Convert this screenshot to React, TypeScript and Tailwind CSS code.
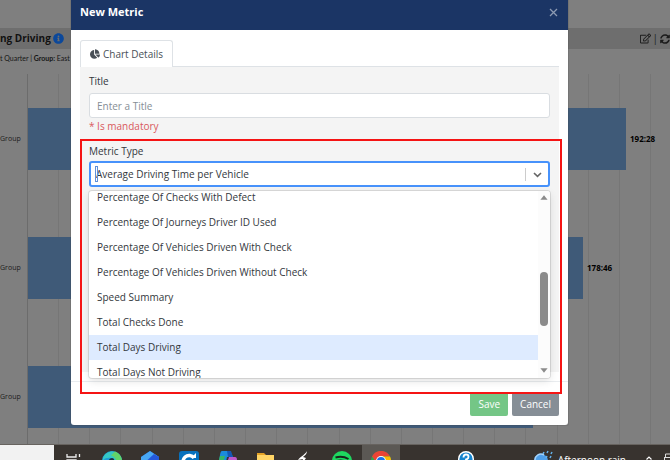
import { FaChartPie, FaInfoCircle, FaRegEdit, FaSyncAlt } from "react-icons/fa";

const bars = [
  { label: "Group", value: "192:28", width: 598 },
  { label: "Group", value: "178:46", width: 555 },
  { label: "Group", value: "", width: 505 },
];

const metricTypes = [
  "Percentage Of Checks With Defect",
  "Percentage Of Journeys Driver ID Used",
  "Percentage Of Vehicles Driven With Check",
  "Percentage Of Vehicles Driven Without Check",
  "Speed Summary",
  "Total Checks Done",
  "Total Days Driving",
  "Total Days Not Driving",
];

const selectedMetric = "Total Days Driving";

function Dashboard() {
  return (
    <main className="flex flex-1 flex-col bg-[#7f7f7f] pt-7 text-black">
      <header className="flex h-[21px] items-center justify-between bg-[#6e6e6e]">
        <h1 className="flex items-center gap-[2px] text-[10px] font-bold text-[#111]">
          ng Driving
          <FaInfoCircle className="size-[11px] text-[#0b489b]" />
        </h1>
        <div className="flex items-center gap-[2px] text-[10px] text-[#1c1c1c]">
          <button type="button" aria-label="Edit">
            <FaRegEdit className="size-[11px]" />
          </button>
          |
          <button type="button" aria-label="Refresh">
            <FaSyncAlt className="size-[10px]" />
          </button>
        </div>
      </header>
      <p className="h-[25px] pt-[2px] font-['Lato','Open_Sans',sans-serif] text-[7px] leading-[14px] whitespace-nowrap text-[#151515]">
        t Quarter | <b>Group:</b> East
      </p>
      <div className="relative flex flex-1 flex-col gap-[67px] pt-[34px]">
        <svg className="absolute inset-0 size-full" aria-hidden="true">
          {Array.from({ length: 21 }, (_, i) => (
            <rect
              key={i}
              x={Math.round(27 + i * 31.15)}
              y="0"
              width="1"
              height="100%"
              fill={i === 0 ? "#6c6c6c" : "#767676"}
            />
          ))}
        </svg>
        {bars.map((bar, i) => (
          <div key={i} className="relative flex h-[62px] items-center">
            <span className="w-7 text-[7px] text-[#1c1c1c]">{bar.label}</span>
            <div className="h-full bg-[#3f5a78]" style={{ width: bar.width }} />
            <span className="pl-1 text-[8px] font-bold">{bar.value}</span>
          </div>
        ))}
      </div>
    </main>
  );
}

function MetricMenu() {
  return (
    <div className="absolute inset-x-0 top-full mt-1 flex h-[187px] overflow-hidden rounded-[3px] bg-white shadow-[0_0_0_1px_rgba(0,0,0,0.1),0_3px_8px_rgba(0,0,0,0.12)]">
      <div className="h-full flex-1 overflow-hidden">
        <ul role="listbox" aria-label="Metric Type options" className="-mt-[6px] grid h-[200px] grid-rows-8">
          {metricTypes.map((type) => (
            <li
              key={type}
              role="option"
              aria-selected={type === selectedMetric}
              className={`flex items-center px-2 text-[10px] ${
                type === selectedMetric ? "bg-[#deebff]" : ""
              }`}
            >
              {type}
            </li>
          ))}
        </ul>
      </div>
      <div className="flex w-3 flex-col items-center bg-[#fcfcfc]">
        <svg viewBox="0 0 8 5" className="mt-1 h-[5px] w-2 fill-[#8b8b8b]">
          <path d="M4 0.3 7.6 4.8H.4z" />
        </svg>
        <div className="mt-[72px] h-[54px] w-2 rounded-full bg-[#8b8b8b]" />
        <svg viewBox="0 0 8 5" className="mt-auto mb-[5px] h-[5px] w-2 fill-[#8b8b8b]">
          <path d="M4 4.7.4.2h7.2z" />
        </svg>
      </div>
    </div>
  );
}

function NewMetricDialog() {
  return (
    <div
      role="dialog"
      aria-labelledby="dialog-title"
      className="flex-1 overflow-hidden rounded-b-[3px] bg-white text-[10px] text-[#33373c]"
    >
      <div className="flex h-[30px] items-start justify-between bg-[#1b3565] pr-[10px] pl-[9px]">
        <h2 id="dialog-title" className="text-[11px] leading-6 font-bold text-white">
          New Metric
        </h2>
        <button type="button" aria-label="Close" className="mt-2 text-[#8d9ab2]">
          <svg viewBox="0 0 9 9" className="size-[9px]" stroke="currentColor" strokeWidth="1.3">
            <path d="M1 1l7 7M8 1L1 8" />
          </svg>
        </button>
      </div>
      <div className="px-[9px] pt-[10px]">
        <div role="tablist" className="flex h-[27px] border-b border-[#dee2e6]">
          <button
            type="button"
            role="tab"
            aria-selected="true"
            className="-mb-px flex items-center gap-[3px] rounded-t-[3px] border border-b-0 border-[#dee2e6] bg-white px-[9px] text-[#495057]"
          >
            <FaChartPie className="size-[10px]" />
            Chart Details
          </button>
        </div>
        <div className="h-[305px] bg-[#f4f4f4] px-[9px] pt-[6px]">
          <label htmlFor="title" className="block leading-4">
            Title
          </label>
          <input
            id="title"
            placeholder="Enter a Title"
            className="mt-1 block h-[25px] w-full rounded-[3px] border border-[#d9dde1] bg-white px-[7px] outline-none placeholder:text-[#868e96]"
          />
          <p className="leading-4 text-[#d9595d]">* Is mandatory</p>
          <label htmlFor="metric-type" className="mt-[9px] block leading-4">
            Metric Type
          </label>
          <div className="relative mt-[2px]">
            <select
              id="metric-type"
              className="block h-[26px] w-full appearance-none rounded-[3px] border-2 border-[#4792fb] bg-white px-[5px] outline-none"
            >
              <option>Average Driving Time per Vehicle</option>
              {metricTypes.map((type) => (
                <option key={type}>{type}</option>
              ))}
            </select>
            <span className="absolute top-[5px] left-[6px] h-4 w-[3px] border border-[#5f8fd8]" />
            <div className="pointer-events-none absolute inset-y-0 right-0 flex items-center gap-[7px] pr-2">
              <span className="h-[13px] w-px bg-[#cccccc]" />
              <svg viewBox="0 0 9 9" className="size-[9px]" fill="none" stroke="#666" strokeWidth="1.6">
                <path d="M1 3l3.5 3.3L8 3" />
              </svg>
            </div>
            <MetricMenu />
          </div>
        </div>
      </div>
      <div className="mt-[9px] flex h-[44px] items-center justify-end gap-1 border-t border-[#e9ecef] px-[9px] pt-px text-white">
        <button type="button" className="h-6 rounded-[2px] bg-[#74c686] px-2">
          Save
        </button>
        <button type="button" className="h-6 rounded-[2px] bg-[#868e96] px-2">
          Cancel
        </button>
      </div>
    </div>
  );
}

function Taskbar() {
  return (
    <footer className="flex h-4 overflow-hidden border-t border-[#67635f] bg-[#38332f]">
      <div className="w-[54px] bg-[#f2f2f2]" />
      <div className="grid h-6 w-[346px] grid-cols-9 justify-items-center [&>svg]:mt-[6px] [&>svg]:size-5">
        <svg viewBox="0 0 20 20" fill="none" stroke="#eee" strokeWidth="1.3">
          <path d="M4 3v3h9V3M4 17V9h9v8M16.500 3v3M16.500 9v8" />
        </svg>
        <svg viewBox="0 0 20 20">
          <circle cx="10" cy="10" r="10" fill="#1d9bd8" />
          <path d="M1 7C4-1 15-2 19 6c2 5-1 8-5 8 0-5-4-8-8-7-3 0-4 1-5 3z" fill="#35c7c4" />
          <path d="M13 .5c5 2 7 6 7 10-1 3-4 4-6 3 1-5-1-8-5-9z" fill="#62d568" />
          <path d="M6 12c0-3 2-5 4-5s3 2 2 5z" fill="#222e3a" />
        </svg>
        <svg viewBox="0 0 20 20">
          <path d="M10 0l9 6v12H1V6z" fill="#1758c7" />
          <path d="M10 0l9 6-12 8-6-4V6z" fill="#48a8f5" />
          <path d="M14 3l5 3v5L6 17l-4-3z" fill="#2458dc" />
        </svg>
        <svg viewBox="0 0 20 20">
          <rect width="20" height="20" rx="3" fill="#0871bd" />
          <path d="M15 7a6 6 0 1 0 0 7" fill="none" stroke="#fff" strokeWidth="3.5" />
          <path d="M12 7h5V2z" fill="#fff" />
        </svg>
        <svg viewBox="0 0 20 20">
          <path d="M5 0h8l3 6h-6L8 16H1L3 4q.5-4 2-4z" fill="#1b8bdc" />
          <path d="M3 5h5L5 16H0z" fill="#35b56a" />
          <path d="M10 0h4l2 6h-5z" fill="#1556b5" />
          <path d="M12 6h6q2 0 2 3l-3 9H8z" fill="#bd5acb" />
        </svg>
        <svg viewBox="0 0 20 20">
          <path d="M2 2h7l2 2h8v4H2z" fill="#e5a326" />
          <path d="M2 4h17v14H2z" fill="#ffd566" />
        </svg>
        <svg viewBox="0 0 20 20" fill="#fff">
          <path d="M13 0c-1 3-6 5-9 9l5-1-2 5 9 4-6-7 2-3-3-1c2-2 4-3 4-6z" />
        </svg>
        <svg viewBox="0 0 20 20">
          <circle cx="10" cy="10" r="10" fill="#1ed760" />
          <path d="M3.5 6.5q7-2 13 1.5M4.5 10q6-1.5 11 1.5M5 13.5q5-1 9 1" fill="none" stroke="#18251c" strokeWidth="2" />
        </svg>
        <div className="flex w-full justify-center bg-[#5b5854] pt-[6px]">
          <svg viewBox="0 0 20 20" className="size-5">
            <circle cx="10" cy="10" r="10" fill="#2da94f" />
            <path d="M1 5.5A10 10 0 0 1 19 5.5H10L6 12z" fill="#ea4335" />
            <path d="M10 5.5h9A10 10 0 0 1 10 20l4-8z" fill="#fbbc04" />
            <circle cx="10" cy="10" r="5" fill="#fff" />
            <circle cx="10" cy="10" r="4" fill="#1a73e8" />
          </svg>
        </div>
      </div>
      <div className="flex h-6 flex-1 items-start justify-end text-white">
        <svg viewBox="0 0 16 16" className="mt-[6px] mr-auto ml-[58px] size-4">
          <circle cx="8" cy="8" r="7.3" fill="#1685cf" stroke="#fff" strokeWidth="1.4" />
          <path d="M5.5 6.5q0-3 2.5-3t2.5 2.3Q10.5 8 8 8.5V10" fill="none" stroke="#fff" strokeWidth="1.8" />
        </svg>
        <svg viewBox="0 0 20 20" className="mt-[5px] size-5">
          <circle cx="8" cy="11" r="7" fill="#4f9fe8" />
          <path d="M2 11a6 6 0 0 1 9-6" fill="none" stroke="#a5d3fb" strokeWidth="1.5" />
          <path d="M11 2l-1 2M15 1l-1 2M19 2l-1 2M14 6l-1 2M18 6l-1 2M17 10l-1 2" stroke="#65b4ee" strokeWidth="1.5" />
        </svg>
        <span className="mt-[7px] ml-[5px] text-[10px] leading-4 whitespace-nowrap">Afternoon rain</span>
        <svg viewBox="0 0 6 6" className="mt-[10px] ml-5 size-[6px]" fill="none" stroke="#fff" strokeWidth="1.2">
          <path d="M.5 4.5L3 2l2.5 2.5" />
        </svg>
        <svg viewBox="0 0 6 9" className="mt-2 ml-3 h-[9px] w-[6px]" fill="none" stroke="#ddd">
          <path d="M6 1H1.5v3M0 4.5h6M.5 4v5" />
        </svg>
      </div>
    </footer>
  );
}

export default function App() {
  return (
    <div className="relative flex h-screen flex-col overflow-hidden font-['Open_Sans','Noto_Sans',sans-serif]">
      <Dashboard />
      <Taskbar />
      <div className="absolute inset-x-0 top-0 flex pr-[102px] pl-[71px]">
        <div className="relative flex flex-1 shadow-[0_0_1px_#444]">
          <NewMetricDialog />
          <div className="pointer-events-none absolute top-[139px] right-[6px] bottom-[31px] left-[9px] border-2 border-[#f51414]" />
        </div>
      </div>
    </div>
  );
}
